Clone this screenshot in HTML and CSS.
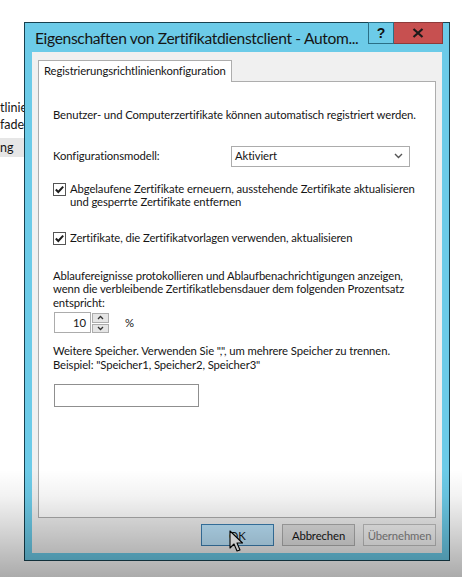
FILE: index.html
```html
<!DOCTYPE html>
<html lang="de">
<head>
<meta charset="utf-8">
<title>Eigenschaften von Zertifikatdienstclient</title>
<link rel="stylesheet" href="styles.css">
</head>
<body>
<div class="desktop">
  <ul class="bg-list">
    <li>tlinie</li>
    <li>fade</li>
    <li class="sel">ng</li>
  </ul>

  <div class="window">
    <div class="titlebar">
      <span class="title">Eigenschaften von Zertifikatdienstclient - Autom...</span>
      <div class="caption-btns">
        <span class="cap-help">?</span>
        <span class="cap-close">
          <svg width="12" height="10" viewBox="0 0 12 10"><path d="M1.5 1 L10.5 9 M10.5 1 L1.5 9" stroke="#1b1b1b" stroke-width="2.2"/></svg>
        </span>
      </div>
    </div>
    <div class="client">
      <div class="tabs">
        <div class="tab">Registrierungsrichtlinienkonfiguration</div>
      </div>
      <div class="panel">
        <p class="intro">Benutzer- und Computerzertifikate können automatisch registriert werden.</p>

        <div class="config-row">
          <span class="label">Konfigurationsmodell:</span>
          <div class="select">
            <span>Aktiviert</span>
            <svg width="9" height="6" viewBox="0 0 9 6"><path d="M1 1 L4.5 4.5 L8 1" fill="none" stroke="#555" stroke-width="1.4"/></svg>
          </div>
        </div>

        <div class="check cb1">
          <span class="box"><svg width="11" height="11" viewBox="0 0 11 11"><path d="M1.8 5.5 L4.3 8 L9.2 2.6" fill="none" stroke="#1e1e1e" stroke-width="2"/></svg></span>
          <span class="check-text">Abgelaufene Zertifikate erneuern, ausstehende Zertifikate aktualisieren<br>und gesperrte Zertifikate entfernen</span>
        </div>

        <div class="check cb2">
          <span class="box"><svg width="11" height="11" viewBox="0 0 11 11"><path d="M1.8 5.5 L4.3 8 L9.2 2.6" fill="none" stroke="#1e1e1e" stroke-width="2"/></svg></span>
          <span class="check-text">Zertifikate, die Zertifikatvorlagen verwenden, aktualisieren</span>
        </div>

        <p class="para">Ablaufereignisse protokollieren und Ablaufbenachrichtigungen anzeigen,<br>wenn die verbleibende Zertifikatlebensdauer dem folgenden Prozentsatz<br>entspricht:</p>

        <div class="spin-row">
          <div class="spinner">
            <span class="spin-val">10</span>
            <div class="spin-arrows">
              <span class="arrow"><svg width="7" height="5" viewBox="0 0 7 5"><path d="M1 4 L3.5 1.5 L6 4" fill="none" stroke="#333" stroke-width="1.3"/></svg></span>
              <span class="arrow"><svg width="7" height="5" viewBox="0 0 7 5"><path d="M1 1 L3.5 3.5 L6 1" fill="none" stroke="#333" stroke-width="1.3"/></svg></span>
            </div>
          </div>
          <span class="pct">%</span>
        </div>

        <p class="para store">Weitere Speicher. Verwenden Sie &quot;,&quot;, um mehrere Speicher zu trennen.<br>Beispiel: &quot;Speicher1, Speicher2, Speicher3&quot;</p>

        <div class="textbox"></div>
      </div>

      <div class="buttons">
        <span class="btn ok">OK</span>
        <span class="btn">Abbrechen</span>
        <span class="btn disabled">Übernehmen</span>
      </div>
    </div>
  </div>

  <svg class="cursor" width="16" height="24" viewBox="0 0 16 24">
    <path d="M1 1 L1 18 L5 14 L8 21 L11 20 L8 13 L13.5 13 Z" fill="#fff" stroke="#000" stroke-width="1.1" stroke-linejoin="round"/>
  </svg>

  <div class="shade"></div>
</div>
</body>
</html>
```

FILE: styles.css
```css
* { box-sizing: border-box; }
html, body { margin: 0; padding: 0; }
body {
  width: 462px;
  height: 577px;
  overflow: hidden;
  background: #ffffff;
  font-family: Lato, "Open Sans", sans-serif;
  font-size: 11.3px;
  letter-spacing: -0.1px;
  color: #151515;
}
.desktop {
  position: relative;
  width: 462px;
  height: 577px;
}
.bg-list {
  position: absolute;
  left: 0;
  top: 99px;
  margin: 0;
  padding: 0;
  list-style: none;
  font-size: 12.5px;
  letter-spacing: 0;
  width: 40px;
}
.bg-list li {
  height: 17px;
  line-height: 17px;
  white-space: nowrap;
}
.bg-list li.sel {
  margin-top: 5px;
  height: 19px;
  line-height: 19px;
  background: #e6e6e6;
}

.window {
  position: absolute;
  left: 24px;
  top: 22px;
  width: 426px;
  height: 539px;
  background: #6ccbe8;
  border: 1px solid #17414f;
  padding: 0 7px 7px 7px;
  display: flex;
  flex-direction: column;
}
.titlebar {
  height: 29px;
  display: flex;
  align-items: flex-start;
  justify-content: space-between;
}
.title {
  font-family: Lato, "Open Sans", sans-serif;
  font-size: 15.6px;
  letter-spacing: -0.35px;
  color: #151515;
  margin-top: 6px;
  margin-left: 3px;
  white-space: nowrap;
}
.caption-btns {
  display: flex;
  flex: none;
  margin-top: -1px;
  margin-right: -1px;
}
.cap-help {
  width: 26px;
  height: 22px;
  border: 1px solid #2a6f86;
  background: #6ccbe8;
  display: flex;
  align-items: center;
  justify-content: center;
  font-weight: 700;
  font-size: 14px;
  letter-spacing: 0;
  font-family: "Liberation Sans", sans-serif;
  color: #111;
}
.cap-close {
  width: 49px;
  height: 22px;
  border: 1px solid #8e3a3a;
  border-left: none;
  background: #c75050;
  display: flex;
  align-items: center;
  justify-content: center;
}
.client {
  flex: 1;
  background: #f0f0f0;
  padding: 8px 6px 0 6px;
  display: flex;
  flex-direction: column;
}
.tabs {
  display: flex;
  height: 21px;
  position: relative;
  z-index: 1;
}
.tab {
  background: #ffffff;
  border: 1px solid #adadad;
  border-bottom: none;
  padding: 0 5px 0 5px;
  line-height: 20px;
  height: 22px;
}
.panel {
  background: #ffffff;
  border: 1px solid #adadad;
  height: 437px;
  padding: 26px 14px 0 14px;
  display: flex;
  flex-direction: column;
  line-height: 13.5px;
}
p { margin: 0; }
.intro { white-space: nowrap; }
.config-row {
  margin-top: 24px;
  display: flex;
  align-items: center;
}
.label { width: 178px; }
.select {
  width: 179px;
  height: 21px;
  border: 1px solid #acacac;
  background: #fff;
  display: flex;
  align-items: center;
  justify-content: space-between;
  padding: 0 6px 0 3px;
}
.check {
  display: flex;
  align-items: flex-start;
}
.cb1 { margin-top: 15px; }
.cb2 { margin-top: 22px; }
.box {
  flex: none;
  width: 13px;
  height: 13px;
  border: 1px solid #555;
  background: #fff;
  display: flex;
  align-items: center;
  justify-content: center;
  margin: 1px 4px 0 0;
}
.check-text { white-space: nowrap; }
.para { margin-top: 24px; white-space: nowrap; }
.spin-row {
  margin-top: 3px;
  display: flex;
  align-items: center;
}
.spinner {
  width: 55px;
  height: 21px;
  display: flex;
  margin-left: 1px;
}
.spin-val {
  width: 37px;
  border: 1px solid #acacac;
  background: #fff;
  text-align: right;
  padding-right: 4px;
  line-height: 19px;
}
.spin-arrows {
  width: 18px;
  display: flex;
  flex-direction: column;
  gap: 1px;
  padding: 1px 0 0 1px;
}
.arrow {
  flex: 1;
  background: #e5e5e5;
  border: 1px solid #acacac;
  display: flex;
  align-items: center;
  justify-content: center;
}
.pct { margin-left: 16px; }
.store { margin-top: 11px; }
.textbox {
  margin-top: 13px;
  margin-left: 1px;
  width: 145px;
  height: 23px;
  border: 1px solid #8f8f8f;
  background: #fff;
}

.buttons {
  display: flex;
  justify-content: flex-end;
  gap: 8px;
  margin-top: 6px;
}
.btn {
  width: 73px;
  height: 22px;
  border: 1px solid #adadad;
  background: #e1e1e1;
  display: flex;
  align-items: center;
  justify-content: center;
}
.btn.ok {
  background: #bee6fd;
  border-color: #3c7fb1;
}
.btn.disabled {
  background: #f4f4f4;
  border-color: #bfbfbf;
  color: #838383;
}
.cursor {
  position: absolute;
  left: 229px;
  top: 530px;
}
.shade {
  position: absolute;
  left: 0;
  right: 0;
  top: 470px;
  bottom: 0;
  pointer-events: none;
  background: linear-gradient(to bottom, rgba(0,0,0,0) 0%, rgba(0,0,0,0.05) 25%, rgba(0,0,0,0.18) 60%, rgba(0,0,0,0.33) 100%);
}
```
